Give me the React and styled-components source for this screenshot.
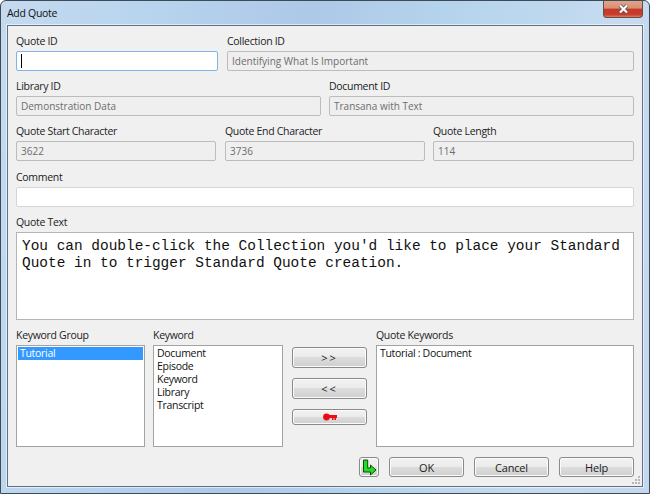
import React from 'react';
import styled, { createGlobalStyle } from 'styled-components';

const Global = createGlobalStyle`
  html, body { margin: 0; padding: 0; background: #fff; }
  body { font-family: "Open Sans", "Noto Sans", sans-serif; font-size: 10.5px; letter-spacing: -0.3px; color: #1c1c1c; }
`;
const Window = styled.div`
  width: 650px; height: 494px; box-sizing: border-box;
  display: flex; flex-direction: column;
  padding: 0 6px 6px;
  border: 1px solid #3d4a58; border-radius: 6px 6px 0 0;
  background: linear-gradient(100deg, #c5daef 0%, #b9d5ee 18%, #aec8e8 42%, #b5d4ec 62%, #c6dbf0 85%, #c3d8ef 100%);
`;
const TitleBar = styled.div`
  height: 24px; flex: none; display: flex; align-items: flex-start; justify-content: space-between;
`;
const Title = styled.span`
  font-size: 10.5px; line-height: 24px; color: #111;
`;
const CloseButton = styled.div`
  width: 40px; height: 17px;
  display: flex; align-items: center; justify-content: center;
  border: 1px solid #6b4a40; border-top: 0; border-radius: 0 0 4px 4px; box-sizing: border-box;
  background: linear-gradient(#e0a58a 0%, #d98f72 45%, #c6392a 50%, #c93d2c 85%, #d6826a 100%);
`;
const Client = styled.div`
  flex: 1; min-height: 0; box-sizing: border-box; position: relative;
  padding: 8px 8px 0;
  background: #f0f0f0; border: 1px solid #5f7183;
  box-shadow: 0 0 0 1px rgba(255, 255, 255, 0.55);
  display: flex; flex-direction: column;
`;
const Row = styled.div`
  display: grid; grid-template-columns: ${p => p.$cols};
  margin-bottom: ${p => p.$after ?? 8}px;
`;
const Field = styled.div`
  display: flex; flex-direction: column; min-width: 0;
  padding-right: ${p => p.$pr || 0}px;
`;
const Label = styled.label`
  display: block; height: 17px; line-height: 14px; white-space: nowrap; color: #222;
`;
const Input = styled.div`
  height: 20px; box-sizing: border-box; padding: 0 4px; line-height: 17px;
  font-size: 10px; letter-spacing: 0; white-space: nowrap; overflow: hidden;
  border-radius: 2px;
  border: 1px solid ${p => p.$focus ? '#7eb4ea' : p.$disabled ? '#bcbcbc' : '#d5d5d5'};
  background: ${p => p.$disabled ? '#efefef' : '#fff'};
  color: #6d6d6d;
  display: flex; align-items: center;
`;
const Caret = styled.span`display: block; width: 1px; height: 14px; background: #000;`;
const TextArea = styled.div`
  height: 88px; box-sizing: border-box; padding: 5px 5px;
  border: 1px solid #b5b5b5; background: #fff;
  font-family: "Liberation Mono", monospace; font-size: 14.45px; letter-spacing: 0; line-height: 17px; color: #111;
  white-space: pre;
`;
const List = styled.div`
  height: 102px; box-sizing: border-box; padding: 1px;
  border: 1px solid #a3a3a3; background: #fff;
  line-height: 13px; color: #111;
`;
const Item = styled.div`
  padding-left: 2px; height: 13px; white-space: nowrap;
  ${p => p.$selected && 'background: #3399ff; color: #fff;'}
`;
const Column = styled.div`
  display: flex; flex-direction: column; gap: 10px; padding: 2px 9px 0 0; margin-top: 17px;
`;
const Button = styled.button`
  height: ${p => p.$h || 20}px; width: ${p => p.$w ? p.$w + 'px' : '100%'}; box-sizing: border-box; padding: 0;
  flex: none; display: flex; align-items: center; justify-content: center;
  font-family: inherit; font-size: 11px; color: #1c1c1c;
  letter-spacing: ${p => p.$spread ? '2px' : '-0.2px'};
  border: 1px solid #8a8a8a; border-radius: 3px;
  box-shadow: inset 0 0 0 1px #fbfbfb;
  background: linear-gradient(#f2f2f2 0%, #ebebeb 49%, #dddddd 50%, #cfcfcf 100%);
`;
const Footer = styled.div`
  display: flex; justify-content: flex-end; gap: 10px; margin-top: 10px;
`;
const Grip = styled.svg`position: absolute; right: 1px; bottom: 1px;`;

const KeyIcon = () => (
  <svg width="14" height="8" viewBox="0 0 14 8">
    <circle cx="3.5" cy="4" r="3.4" fill="#f00a14" />
    <path d="M5 2h9v3h-1v2h-1.5V5h-1v2H9V5H5z" fill="#f00a14" />
    <circle cx="2.6" cy="3.5" r="0.7" fill="#a01510" />
  </svg>
);
const ArrowIcon = () => (
  <svg width="15" height="17" viewBox="0 0 15 17">
    <path d="M1.5 1h4.2v8h2.8V6l5.5 5-5.5 5v-3H1.5z" fill="#22dd22" stroke="#0d4d0d" strokeWidth="1" strokeLinejoin="round" />
  </svg>
);

export default function App() {
  return (
    <>
      <Global />
      <Window>
        <TitleBar>
          <Title>Add Quote</Title>
          <CloseButton>
            <svg width="11" height="10" viewBox="0 0 11 10">
              <path d="M2 1.5l7 7M9 1.5l-7 7" stroke="#4a4a4a" strokeWidth="3.6" />
              <path d="M2 1.5l7 7M9 1.5l-7 7" stroke="#fff" strokeWidth="2.2" />
            </svg>
          </CloseButton>
        </TitleBar>
        <Client>
          <Row $cols="211px 407px">
            <Field $pr={9}><Label>Quote ID</Label><Input $focus><Caret /></Input></Field>
            <Field><Label>Collection ID</Label><Input $disabled>Identifying What Is Important</Input></Field>
          </Row>
          <Row $cols="313px 305px">
            <Field $pr={8}><Label>Library ID</Label><Input $disabled>Demonstration Data</Input></Field>
            <Field><Label>Document ID</Label><Input $disabled>Transana with Text</Input></Field>
          </Row>
          <Row $cols="209px 208px 201px" $after={9}>
            <Field $pr={9}><Label>Quote Start Character</Label><Input $disabled>3622</Input></Field>
            <Field $pr={8}><Label>Quote End Character</Label><Input $disabled>3736</Input></Field>
            <Field><Label>Quote Length</Label><Input $disabled>114</Input></Field>
          </Row>
          <Row $cols="618px">
            <Field><Label>Comment</Label><Input /></Field>
          </Row>
          <Row $cols="618px">
            <Field><Label>Quote Text</Label><TextArea>{"You can double-click the Collection you'd like to place your Standard\nQuote in to trigger Standard Quote creation."}</TextArea></Field>
          </Row>
          <Row $cols="137px 139px 84px 258px" $after={0}>
            <Field $pr={8}><Label>Keyword Group</Label><List><Item $selected>Tutorial</Item></List></Field>
            <Field $pr={9}><Label>Keyword</Label><List>
              <Item>Document</Item><Item>Episode</Item><Item>Keyword</Item><Item>Library</Item><Item>Transcript</Item>
            </List></Field>
            <Column>
              <Button $h={21} $spread>&gt;&gt;</Button>
              <Button $h={21} $spread>&lt;&lt;</Button>
              <Button $h={16}><KeyIcon /></Button>
            </Column>
            <Field><Label>Quote Keywords</Label><List><Item>Tutorial : Document</Item></List></Field>
          </Row>
          <Footer>
            <Button $w={20}><ArrowIcon /></Button>
            <Button $w={75}>OK</Button>
            <Button $w={75}>Cancel</Button>
            <Button $w={75}>Help</Button>
          </Footer>
          <Grip width="10" height="10" viewBox="0 0 10 10" fill="#b8b8b8">
            <rect x="7" y="1" width="2" height="2" /><rect x="4" y="4" width="2" height="2" /><rect x="7" y="4" width="2" height="2" />
            <rect x="1" y="7" width="2" height="2" /><rect x="4" y="7" width="2" height="2" /><rect x="7" y="7" width="2" height="2" />
          </Grip>
        </Client>
      </Window>
    </>
  );
}
